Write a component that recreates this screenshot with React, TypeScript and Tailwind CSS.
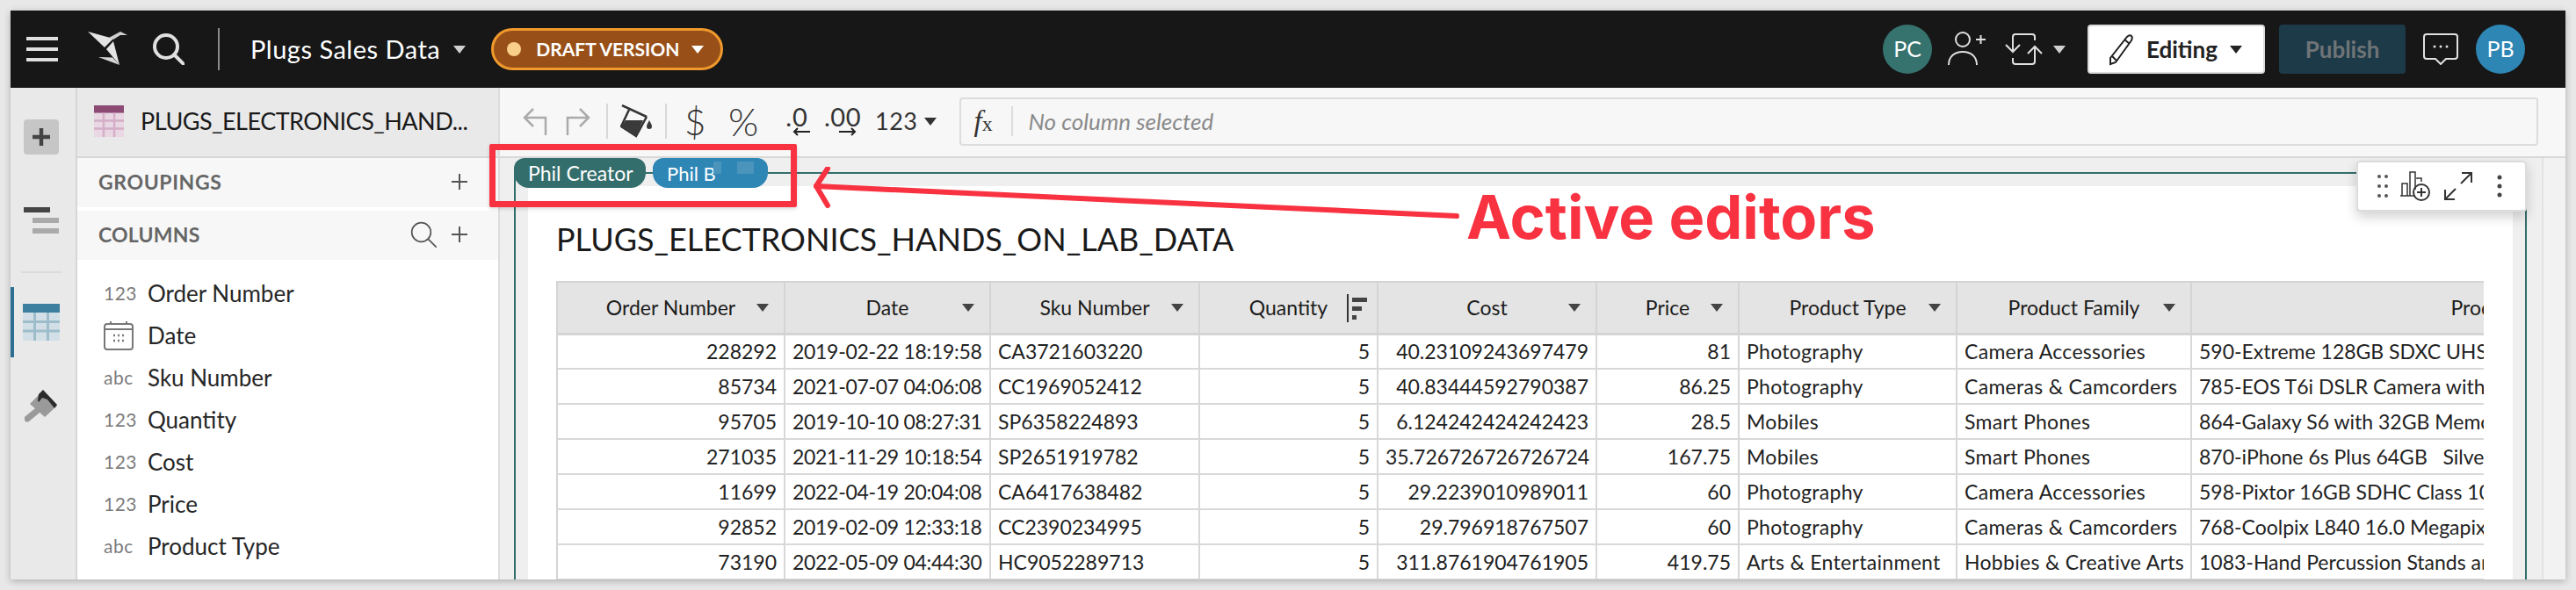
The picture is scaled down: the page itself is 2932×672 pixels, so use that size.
import React from "react";

const font = { fontFamily: '"Lato", "Noto Sans", sans-serif' };

function Caret({ className = "" }: { className?: string }) {
  return (
    <svg width="14" height="10" viewBox="0 0 14 10" className={"shrink-0 " + className}>
      <path d="M0 1h14L7 10z" fill="currentColor" />
    </svg>
  );
}

function Plus({ size = 18, color = "#444", sw = 2 }: { size?: number; color?: string; sw?: number }) {
  return (
    <svg width={size} height={size} viewBox="0 0 18 18" className="shrink-0">
      <path d="M9 0v18M0 9h18" stroke={color} strokeWidth={sw} fill="none" />
    </svg>
  );
}

function SearchIcon({ size, color, sw }: { size: number; color: string; sw: number }) {
  return (
    <svg width={size} height={size} viewBox="0 0 36 36" fill="none" className="shrink-0">
      <circle cx="15" cy="15" r="13" stroke={color} strokeWidth={sw} />
      <path d="M24.5 24.5L35 35" stroke={color} strokeWidth={sw} strokeLinecap="round" />
    </svg>
  );
}

function TableIcon({ w, h, top, cell, line }: { w: number; h: number; top: number | string; cell: string; line: string }) {
  return (
    <svg width={w} height={h} viewBox="0 0 42 42" preserveAspectRatio="none" className="shrink-0">
      <rect width="42" height="42" fill={cell} />
      <rect width="42" height="10" fill={String(top)} />
      <path d="M0 20.5h42M0 31h42M13.5 10v32M28.5 10v32" stroke={line} strokeWidth="3" />
    </svg>
  );
}

function Logo() {
  return (
    <svg width="46" height="40" viewBox="0 0 46 40" className="shrink-0">
      <path d="M0 0L29 8 19 18z" fill="#e4e4e4" />
      <path d="M22 8L37 0 45 4 37 4 29 9 25 7z" fill="#cfcfcf" />
      <path d="M21 20L29 11 36 38z" fill="#e4e4e4" />
      <path d="M12 29L28 29.500 36 38z" fill="#d8d8d8" />
    </svg>
  );
}

function Rail() {
  return (
    <div className="w-[76px] shrink-0 bg-[#e9e9e9] border-r-2 border-[#d6d6d6] flex flex-col">
      <div className="h-[36px] shrink-0" />
      <div className="ml-[15px] w-[40px] h-[40px] rounded-[4px] bg-[#c6c6c6] flex items-center justify-center">
        <Plus size={20} color="#444" sw={4} />
      </div>
      <div className="mt-[60px] ml-[15px] w-[40px] flex flex-col gap-[6px]">
        <div className="w-[30px] h-[6px] bg-[#444]" />
        <div className="ml-[10px] w-[30px] h-[6px] bg-[#aaa]" />
        <div className="ml-[10px] w-[30px] h-[6px] bg-[#aaa]" />
      </div>
      <div className="mt-[43px] ml-[12px] w-[46px] h-[2px] bg-[#dcdcdc]" />
      <div className="mt-[16px] h-[80px] flex items-center border-l-4 border-[#2c6f91] pl-[10px]">
        <TableIcon w={42} h={42} top="#3d7f9f" cell="#d3dfe6" line="#9dbdcb" />
      </div>
      <div className="mt-[37px] ml-[16px]">
        <svg width="38" height="38" viewBox="0 0 38 38">
          <path d="M6 16L21 1 37 18 23 31z" fill="#9a9a9a" />
          <path d="M14 24L3 33" stroke="#9a9a9a" strokeWidth="7" strokeLinecap="round" />
          <path d="M21 0L37 17 34 21 26 11 20 9 16 14 15 12 16 5z" fill="#2b2b2b" />
        </svg>
      </div>
    </div>
  );
}

const fields: [string, string][] = [
  ["123", "Order Number"],
  ["cal", "Date"],
  ["abc", "Sku Number"],
  ["123", "Quantity"],
  ["123", "Cost"],
  ["123", "Price"],
  ["abc", "Product Type"],
];

function SidePanel() {
  return (
    <div className="w-[481px] shrink-0 bg-white border-r-2 border-[#dcdcdc] flex flex-col overflow-hidden">
      <div className="h-[80px] shrink-0 bg-[#e9e9e9] border-b-2 border-[#d8d8d8] flex items-center pl-[19px] pb-[2px] gap-[19px]">
        <TableIcon w={34} h={36} top="#8c4a74" cell="#e9d7e3" line="#d4afc7" />
        <span className="text-[27px] text-[#1a1a1a] whitespace-nowrap tracking-[-0.5px]">PLUGS_ELECTRONICS_HAND...</span>
      </div>
      <div className="h-[56px] shrink-0 bg-[#f7f7f7] flex items-center justify-between pl-[24px] pr-[35px] pb-[2px]">
        <span className="text-[23px] font-bold text-[#666] tracking-[0.6px]">GROUPINGS</span>
        <Plus color="#555" />
      </div>
      <div className="h-[4px] shrink-0" />
      <div className="h-[56px] shrink-0 bg-[#f7f7f7] flex items-center justify-between pl-[24px] pr-[35px] pb-[2px]">
        <span className="text-[23px] font-bold text-[#666] tracking-[0.2px]">COLUMNS</span>
        <div className="flex items-center gap-[17px]">
          <SearchIcon size={30} color="#555" sw={2} />
          <Plus color="#555" />
        </div>
      </div>
      <div className="pt-[14px] flex flex-col">
        {fields.map(([k, n]) => (
          <div key={n} className="h-[48px] flex items-center">
            <div className="w-[80px] pl-[30px] shrink-0 text-[21px] text-[#7c7c7c] tracking-[0.5px]">
              {k === "cal" ? (
                <svg width="34" height="34" viewBox="0 0 34 34" fill="none" stroke="#777" strokeWidth="2">
                  <rect x="1" y="4" width="32" height="29" rx="3" />
                  <path d="M1 10h32M8 1v4M26 1v4" />
                  <path d="M11 17h2M16 17h2M21 17h2M11 23h2M16 23h2M21 23h2" strokeWidth="2.5" />
                </svg>
              ) : (
                k
              )}
            </div>
            <span className="text-[26px] text-[#262626]">{n}</span>
          </div>
        ))}
      </div>
    </div>
  );
}

function Divider() {
  return <div className="w-[2px] h-[40px] bg-[#d8d8d8] shrink-0" />;
}

function Toolbar() {
  return (
    <div className="h-[80px] shrink-0 bg-[#f7f7f7] border-b-2 border-[#d8d8d8] flex items-center pl-[26px] pr-[31px] pb-[2px]">
      <svg width="28" height="34" viewBox="0 0 28 34" fill="none" stroke="#aaa" strokeWidth="2.5" className="shrink-0">
        <path d="M12 3L2 13l10 10M2 13h24v20" />
      </svg>
      <svg width="28" height="34" viewBox="0 0 28 34" fill="none" stroke="#aaa" strokeWidth="2.5" className="ml-[21px] shrink-0">
        <path d="M16 3l10 10-10 10M26 13H2v20" />
      </svg>
      <div className="ml-[18px]"><Divider /></div>
      <svg width="36" height="38" viewBox="0 0 36 38" fill="none" className="ml-[14px] shrink-0">
        <path d="M2 1L30 14" stroke="#333" strokeWidth="2.5" />
        <path d="M10 6L1 25l17 11 12-22" stroke="#333" strokeWidth="2.5" />
        <path d="M6 18h20l-8 18-17-10z" fill="#3a3a3a" />
        <path d="M33 18c-2 4-3 5-3 7a3 3 0 0 0 6 0c0-2-1-3-3-7z" fill="#3a3a3a" />
      </svg>
      <div className="ml-[15px]"><Divider /></div>
      <span className="ml-[20px] text-[42px] text-[#333] font-light leading-none w-[24px]">$</span>
      <span className="ml-[26px] text-[44px] text-[#333] font-light leading-none w-[36px]">%</span>
      <div className="ml-[25px] w-[34px] flex flex-col items-center leading-none shrink-0">
        <span className="text-[29px] text-[#333] leading-[24px] tracking-[1px]">.0</span>
        <svg width="20" height="10" viewBox="0 0 20 10" fill="none" stroke="#222" strokeWidth="2" className="ml-[10px]">
          <path d="M20 5H2M6 1L2 5l4 4" />
        </svg>
      </div>
      <div className="ml-[16px] w-[38px] flex flex-col items-center leading-none shrink-0">
        <span className="text-[29px] text-[#333] leading-[24px] tracking-[0.5px]">.00</span>
        <svg width="20" height="10" viewBox="0 0 20 10" fill="none" stroke="#222" strokeWidth="2" className="ml-[12px]">
          <path d="M0 5h18M14 1l4 4-4 4" />
        </svg>
      </div>
      <span className="ml-[18px] text-[27px] text-[#333] tracking-[0.5px]">123</span>
      <Caret className="ml-[8px] text-[#333]" />
      <div className="ml-[26px] flex-1 h-[55px] border-2 border-[#dcdcdc] rounded-[4px] flex items-center">
        <span className="ml-[14px] w-[31px] text-[33px] leading-none text-[#333] italic whitespace-nowrap" style={{ fontFamily: '"Liberation Serif", serif' }}>
          f<span className="text-[24px] not-italic">x</span>
        </span>
        <div className="ml-[12px] w-[2px] h-[34px] bg-[#dcdcdc]" />
        <span className="ml-[17px] text-[26px] italic text-[#8a8a8a]">No column selected</span>
      </div>
    </div>
  );
}

type Col = { w: number; name: string; right?: boolean; sort?: boolean };
const cols: Col[] = [
  { w: 258, name: "Order Number", right: true },
  { w: 234, name: "Date" },
  { w: 238, name: "Sku Number" },
  { w: 203, name: "Quantity", right: true, sort: true },
  { w: 249, name: "Cost", right: true },
  { w: 162, name: "Price", right: true },
  { w: 248, name: "Product Type" },
  { w: 267, name: "Product Family" },
  { w: 736, name: "Product Name" },
];

const rows: string[][] = [
  ["228292", "2019-02-22 18:19:58", "CA3721603220", "5", "40.23109243697479", "81", "Photography", "Camera Accessories", "590-Extreme 128GB SDXC UHS-II Memory Card"],
  ["85734", "2021-07-07 04:06:08", "CC1969052412", "5", "40.83444592790387", "86.25", "Photography", "Cameras & Camcorders", "785-EOS T6i DSLR Camera with 18-55mm Lens"],
  ["95705", "2019-10-10 08:27:31", "SP6358224893", "5", "6.124242424242423", "28.5", "Mobiles", "Smart Phones", "864-Galaxy S6 with 32GB Memory"],
  ["271035", "2021-11-29 10:18:54", "SP2651919782", "5", "35.726726726726724", "167.75", "Mobiles", "Smart Phones", "870-iPhone 6s Plus 64GB   Silver"],
  ["11699", "2022-04-19 20:04:08", "CA6417638482", "5", "29.2239010989011", "60", "Photography", "Camera Accessories", "598-Pixtor 16GB SDHC Class 10 Card"],
  ["92852", "2019-02-09 12:33:18", "CC2390234995", "5", "29.796918767507", "60", "Photography", "Cameras & Camcorders", "768-Coolpix L840 16.0 Megapixel Camera"],
  ["73190", "2022-05-09 04:44:30", "HC9052289713", "5", "311.8761904761905", "419.75", "Arts & Entertainment", "Hobbies & Creative Arts", "1083-Hand Percussion Stands and Mounts"],
];

function DataTable() {
  return (
    <div className="mt-[25px] w-[2194px] overflow-hidden border-l-2 border-t-2 border-[#d4d4d4]">
      <table className="table-fixed border-collapse w-[2395px]">
        <colgroup>
          {cols.map((c) => (
            <col key={c.name} style={{ width: c.w }} />
          ))}
        </colgroup>
        <thead>
          <tr className="h-[58px] bg-[#e4e4e4] border-b-[3px] border-[#d4d4d4]">
            {cols.map((c, i) => (
              <th key={c.name} className="relative p-0 border-r-2 border-[#d4d4d4] text-center font-normal text-[23px] text-[#1c1c1c]">
                {c.name}
                {i < 8 && !c.sort && <Caret className="absolute right-[17px] top-[23px] text-[#444]" />}
                {c.sort && (
                  <svg width="24" height="32" viewBox="0 0 24 32" className="absolute right-[10px] top-[13px]">
                    <path d="M1 0v32" stroke="#333" strokeWidth="2" />
                    <path d="M6 4h17v5H6zM6 14h11v5H6zM6 24h5v5H6z" fill="#444" />
                  </svg>
                )}
              </th>
            ))}
          </tr>
        </thead>
        <tbody>
          {rows.map((r, ri) => (
            <tr key={ri} className="h-[40px] border-b-2 border-[#d8d8d8]">
              <td className="p-0 px-[8px] border-r-2 border-[#d8d8d8] text-[23px] text-[#222] text-right whitespace-pre overflow-hidden">{r[0]}</td>
              <td className="p-0 px-[8px] border-r-2 border-[#d8d8d8] text-[23px] text-[#222] text-left tracking-[-0.3px] whitespace-pre overflow-hidden">{r[1]}</td>
              <td className="p-0 px-[8px] border-r-2 border-[#d8d8d8] text-[23px] text-[#222] text-left whitespace-pre overflow-hidden">{r[2]}</td>
              <td className="p-0 px-[8px] border-r-2 border-[#d8d8d8] text-[23px] text-[#222] text-right whitespace-pre overflow-hidden">{r[3]}</td>
              <td className="p-0 px-[8px] border-r-2 border-[#d8d8d8] text-[23px] text-[#222] text-right whitespace-pre overflow-hidden">{r[4]}</td>
              <td className="p-0 px-[8px] border-r-2 border-[#d8d8d8] text-[23px] text-[#222] text-right whitespace-pre overflow-hidden">{r[5]}</td>
              <td className="p-0 px-[8px] border-r-2 border-[#d8d8d8] text-[23px] text-[#222] text-left tracking-[0.3px] whitespace-pre overflow-hidden">{r[6]}</td>
              <td className="p-0 px-[8px] border-r-2 border-[#d8d8d8] text-[23px] text-[#222] text-left tracking-[0.3px] whitespace-pre overflow-hidden">{r[7]}</td>
              <td className="p-0 px-[8px] border-r-2 border-[#d8d8d8] text-[23px] text-[#222] text-left whitespace-pre overflow-hidden">{r[8]}</td>
            </tr>
          ))}
        </tbody>
      </table>
    </div>
  );
}

function Canvas() {
  return (
    <div className="relative flex-1 min-h-0 flex bg-[#efefef] overflow-hidden">
      <div className="flex-1 min-w-0 pl-[16px] pt-[16px] pr-[17px]">
        <div className="h-full border-l-2 border-t-2 border-r-2 border-[#336e6c] pl-[14px] pt-[14px] pr-[14px]">
          <div className="h-full bg-white pl-[32px] pt-[37px]">
            <div className="text-[36px] leading-[46px] text-[#1a1a1a] whitespace-nowrap">PLUGS_ELECTRONICS_HANDS_ON_LAB_DATA</div>
            <DataTable />
          </div>
        </div>
      </div>
      <div className="w-[27px] shrink-0 border-l-2 border-[#e2e2e2] bg-[#f2f2f2]" />

      <div className="absolute left-[16px] top-0 h-[34px] flex gap-[8px]">
        <div className="w-[150px] h-[34px] rounded-b-[17px] rounded-t-[12px] bg-[#336e6c] text-white text-[23px] flex items-center pl-[16px]">Phil Creator</div>
        <div className="w-[131px] h-[34px] rounded-b-[17px] rounded-t-[12px] bg-[#2e86b5] text-white text-[22px] flex items-center pl-[16px] relative">
          Phil B
          <div className="absolute left-[69px] top-[4px] w-[9px] h-[14px] bg-[#4b94bb]" />
          <div className="absolute left-[96px] top-[4px] w-[19px] h-[14px] bg-[#4b94bb]" />
        </div>
      </div>

      <div className="absolute left-[2113px] top-[3px] w-[194px] h-[58px] bg-white border-2 border-[#dcdcdc] rounded-[4px] shadow-[0_6px_14px_rgba(0,0,0,0.18)] flex items-center pl-[22px] gap-[14px]">
        <svg width="12" height="26" viewBox="0 0 12 26" fill="#555" className="shrink-0">
          <circle cx="2" cy="2" r="2" /><circle cx="10" cy="2" r="2" />
          <circle cx="2" cy="13" r="2" /><circle cx="10" cy="13" r="2" />
          <circle cx="2" cy="24" r="2" /><circle cx="10" cy="24" r="2" />
        </svg>
        <svg width="34" height="34" viewBox="0 0 34 34" fill="none" stroke="#333" strokeWidth="1.5" className="shrink-0">
          <path d="M0 28h16M2 28V14h6v14M11 28V1h6v20M19 9V8h5v4" />
          <circle cx="24" cy="24" r="9" strokeWidth="2" />
          <path d="M24 19v10M19 24h10" strokeWidth="2" />
        </svg>
        <svg width="32" height="32" viewBox="0 0 32 32" fill="none" stroke="#333" strokeWidth="2" className="ml-[2px] shrink-0">
          <path d="M19 13L31 1M20 1h11v11M13 19L1 31M1 20v11h11" />
        </svg>
        <svg width="6" height="26" viewBox="0 0 6 26" fill="#444" className="ml-[14px] shrink-0">
          <circle cx="3" cy="3" r="2.5" /><circle cx="3" cy="13" r="2.5" /><circle cx="3" cy="23" r="2.5" />
        </svg>
      </div>
    </div>
  );
}

function TopBar() {
  return (
    <div className="h-[88px] shrink-0 bg-[#171717] flex items-center">
      <div className="ml-[18px] w-[36px] flex flex-col gap-[8px] shrink-0">
        <div className="h-[4px] bg-[#e0e0e0]" />
        <div className="h-[4px] bg-[#e0e0e0]" />
        <div className="h-[4px] bg-[#e0e0e0]" />
      </div>
      <div className="ml-[34px]"><Logo /></div>
      <div className="ml-[28px]"><SearchIcon size={36} color="#e0e0e0" sw={4} /></div>
      <div className="ml-[38px] w-[2px] h-[48px] bg-[#8a8a8a]" />
      <span className="ml-[35px] text-[29px] text-white whitespace-nowrap tracking-[0.5px]">Plugs Sales Data</span>
      <Caret className="ml-[15px] text-[#d0d0d0]" />
      <div className="ml-[29px] w-[264px] h-[48px] rounded-[24px] bg-[#985018] border-[3px] border-[#f0992c] flex items-center pl-[15px]">
        <div className="w-[16px] h-[16px] rounded-full bg-[#f9cf8a]" />
        <span className="ml-[17px] text-[21px] font-bold text-white whitespace-nowrap">DRAFT VERSION</span>
        <Caret className="ml-[14px] text-white" />
      </div>
      <div className="flex-1" />
      <div className="w-[56px] h-[56px] rounded-full bg-[#36736f] text-white text-[25px] flex items-center justify-center">PC</div>
      <svg width="44" height="40" viewBox="0 0 44 40" fill="none" stroke="#e0e0e0" strokeWidth="2" className="ml-[18px] shrink-0">
        <circle cx="17" cy="9" r="8" />
        <path d="M1 38c0-10 7-15 16-15s16 5 16 15" />
        <path d="M32 9h11M37.500 4v10" />
      </svg>
      <svg width="44" height="36" viewBox="0 0 44 36" fill="none" stroke="#e0e0e0" strokeWidth="2" className="ml-[21px] shrink-0">
        <path d="M9 20V4a3 3 0 0 1 3-3h19a3 3 0 0 1 3 3v4M1 13l8 8 8-8" />
        <path d="M34 16v16a3 3 0 0 1-3 3H12a3 3 0 0 1-3-3v-4M26 23l8-8 8 8" />
      </svg>
      <Caret className="ml-[11px] text-[#d0d0d0]" />
      <div className="ml-[25px] w-[202px] h-[56px] rounded-[4px] bg-white border-2 border-[#dcdcdc] flex items-center pl-[22px]">
        <svg width="28" height="42" viewBox="0 0 28 42" fill="none" stroke="#222" strokeWidth="2" className="shrink-0">
          <path d="M2 31L21 7c2-2 4-2 5-1s1 3 0 5L8 36l-6 2zM18 10l6 5M4 29l5 5" />
        </svg>
        <span className="ml-[15px] text-[26px] font-bold text-[#222]">Editing</span>
        <Caret className="ml-[14px] text-[#222]" />
      </div>
      <div className="ml-[16px] w-[144px] h-[56px] rounded-[4px] bg-[#1d3a49] text-[#6f7476] text-[26px] font-bold flex items-center justify-center">Publish</div>
      <svg width="40" height="36" viewBox="0 0 40 36" fill="none" stroke="#e0e0e0" strokeWidth="2" className="ml-[20px] shrink-0">
        <path d="M4 1h32a3 3 0 0 1 3 3v22a3 3 0 0 1-3 3H26l-6 6-6-6H4a3 3 0 0 1-3-3V4a3 3 0 0 1 3-3z" />
        <circle cx="13" cy="15" r="1.5" fill="#e0e0e0" stroke="none" />
        <circle cx="20" cy="15" r="1.5" fill="#e0e0e0" stroke="none" />
        <circle cx="27" cy="15" r="1.500" fill="#e0e0e0" stroke="none" />
      </svg>
      <div className="ml-[20px] mr-[46px] w-[56px] h-[56px] rounded-full bg-[#2e86b5] text-white text-[25px] flex items-center justify-center">PB</div>
    </div>
  );
}

function Annotation() {
  return (
    <>
      <div className="absolute left-[557px] top-[164px] w-[350px] h-[72px] border-[7px] border-[#f93241] rounded-[2px] shadow-[0_2px_4px_rgba(0,0,0,0.15)]" />
      <svg width="760" height="70" viewBox="0 0 760 70" className="absolute left-[920px] top-[190px]" fill="none" stroke="#f93241" strokeWidth="6" strokeLinecap="round" strokeLinejoin="round">
        <path d="M9 22L738 56" />
        <path d="M22 2L9 22 22 44" />
      </svg>
      <div className="absolute left-[1669px] top-[206px] text-[68.500px] leading-[84px] font-bold text-[#f93241] whitespace-nowrap" style={{ fontFamily: '"Inter", sans-serif' }}>
        Active editors
      </div>
    </>
  );
}

export default function App() {
  return (
    <div className="relative w-[2932px] h-[672px] bg-[#e8e8e8] p-[12px] overflow-hidden" style={font}>
      <div className="w-[2908px] h-[648px] flex flex-col bg-white shadow-[0_2px_8px_rgba(0,0,0,0.25)]">
        <TopBar />
        <div className="flex-1 min-h-0 flex">
          <Rail />
          <SidePanel />
          <div className="flex-1 min-w-0 flex flex-col">
            <Toolbar />
            <Canvas />
          </div>
        </div>
      </div>
      <Annotation />
    </div>
  );
}
